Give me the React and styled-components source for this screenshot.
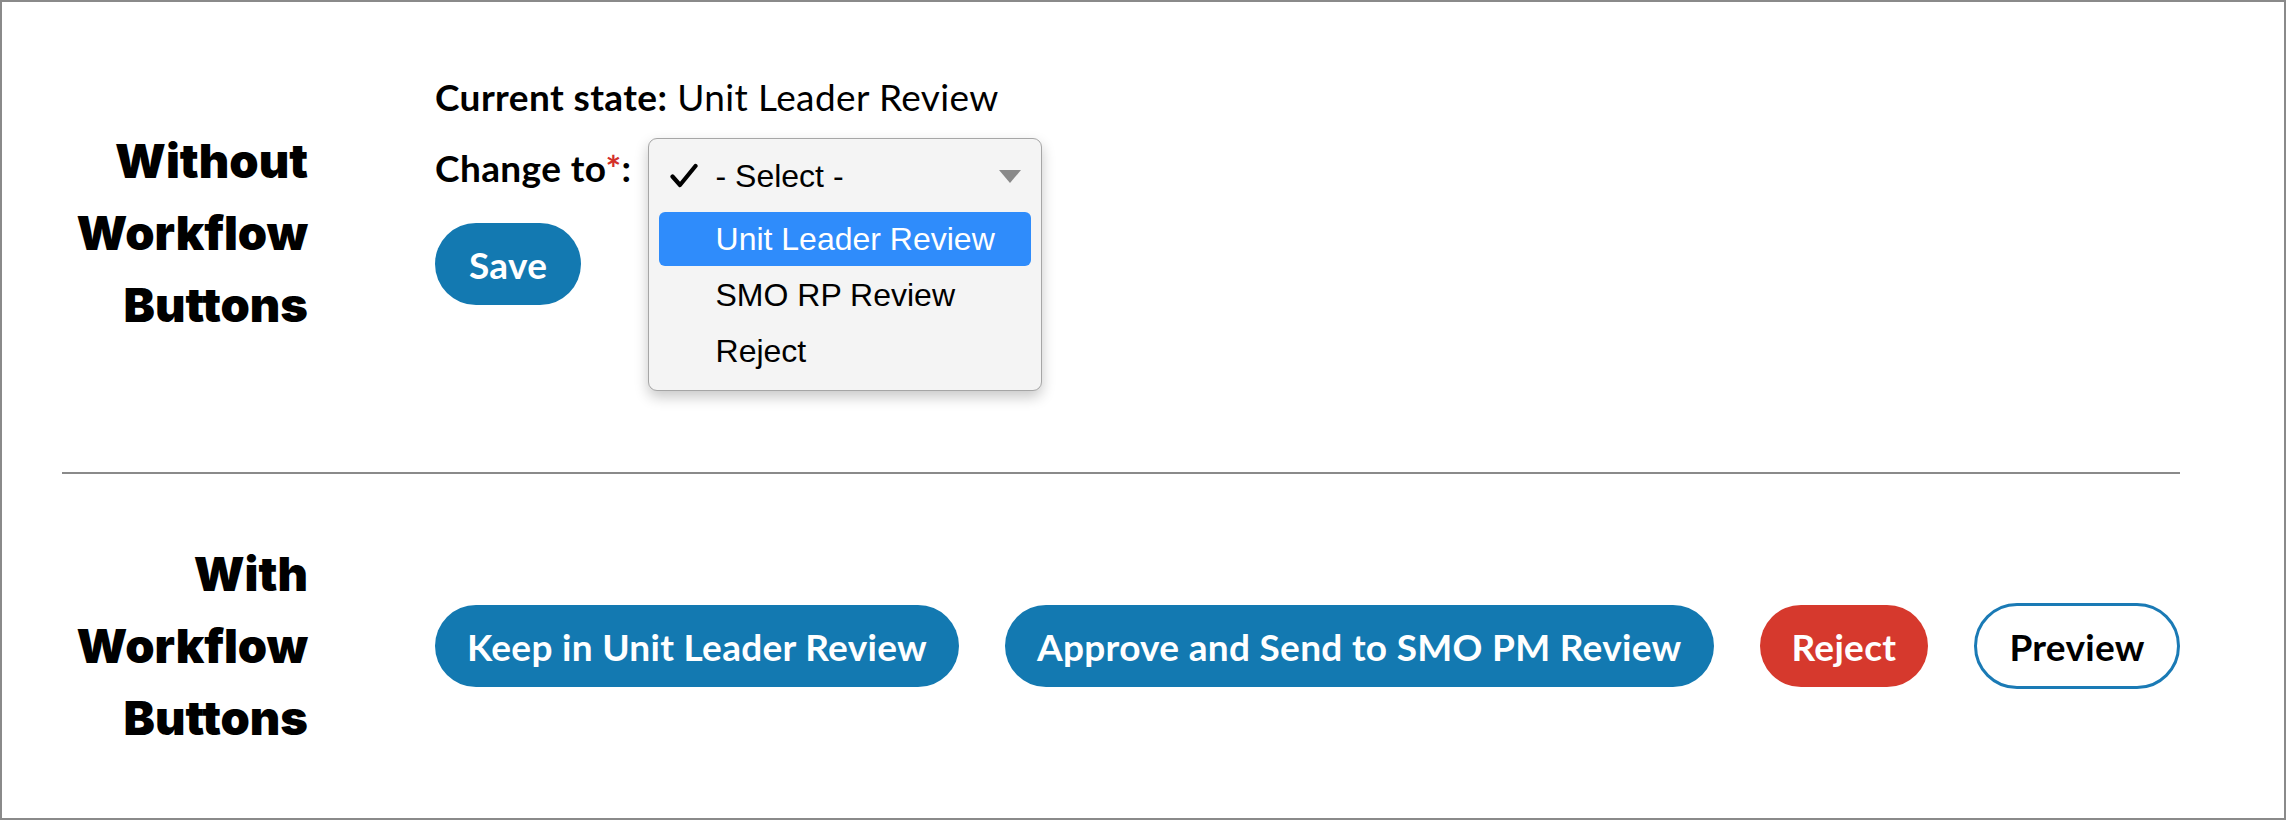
import React from 'react';
import styled, { createGlobalStyle } from 'styled-components';

const GlobalStyle = createGlobalStyle`
  * { box-sizing: border-box; }
  body {
    margin: 0;
    background: #ffffff;
    font-family: 'Lato', 'Open Sans', Arial, sans-serif;
    color: #000;
  }
`

const Frame = styled.div`
  width: 2286px;
  height: 820px;
  border: 2px solid #8a8a8a;
  background: #fff;
`

const Section = styled.div`
  display: flex;
  align-items: center;
  height: ${p => p.$height}px;
`

const Heading = styled.h2`
  flex-shrink: 0;
  width: 306px;
  margin: 0 0 ${p => p.$lift || 0}px;
  text-align: right;
  font-family: 'Inter', 'DejaVu Sans', sans-serif;
  font-weight: 900;
  font-size: 47px;
  line-height: 72px;
`

const StateForm = styled.div`
  align-self: flex-start;
  display: flex;
  flex-direction: column;
  align-items: flex-start;
  margin-left: 127px;
  padding-top: 73px;
`

const StateLine = styled.div`
  font-size: 37px;
  line-height: 44px;
  letter-spacing: 0.4px;
  b { font-weight: 700; }
`

const ChangeRow = styled.div`
  display: flex;
  align-items: center;
  height: 44px;
  margin-top: 27px;
`

const FieldLabel = styled.label`
  font-size: 37px;
  line-height: 44px;
  letter-spacing: 0.4px;
  font-weight: 700;
`

const Req = styled.span`
  color: #d3302b;
`

const SelectWrap = styled.div`
  position: relative;
  width: 394px;
  height: 44px;
  margin-left: 16px;
`

const Menu = styled.ul`
  position: absolute;
  top: -8px;
  left: 0;
  width: 394px;
  margin: 0;
  padding: 10px 10px 12px;
  list-style: none;
  background: #f4f4f4;
  border: 1px solid #a6a6a6;
  border-radius: 9px;
  box-shadow: 0 6px 14px rgba(0, 0, 0, 0.22);
  font-family: 'Liberation Sans', Arial, sans-serif;
  font-size: 32px;
  display: flex;
  flex-direction: column;
  gap: 2px;
`

const Option = styled.li`
  position: relative;
  display: flex;
  align-items: center;
  height: 54px;
  padding-left: 57px;
  border-radius: 6px;
  color: ${p => (p.$active ? '#fff' : '#000')};
  background: ${p => (p.$active ? '#2f8cfb' : 'transparent')};
  margin-bottom: ${p => (p.$first ? '7px' : '0')};
`

const Check = styled.svg`
  position: absolute;
  left: 11px;
  top: 14px;
`

const Arrow = styled.span`
  position: absolute;
  right: 10px;
  top: 21px;
  width: 0;
  height: 0;
  border-left: 11px solid transparent;
  border-right: 11px solid transparent;
  border-top: 13px solid #8a8a8a;
`

const Button = styled.button`
  height: ${p => (p.$variant === 'outline' ? 86 : 82)}px;
  padding: 0 32px;
  border-radius: 44px;
  border: ${p => (p.$variant === 'outline' ? '3px solid #1a7ab5' : 'none')};
  background: ${p =>
    p.$variant === 'danger' ? '#d6392d' : p.$variant === 'outline' ? '#fff' : '#1379b1'};
  color: ${p => (p.$variant === 'outline' ? '#000' : '#fff')};
  font-family: 'Lato', 'Open Sans', Arial, sans-serif;
  font-size: 37px;
  font-weight: 700;
  letter-spacing: 0.3px;
  white-space: nowrap;
  cursor: pointer;
`

const SaveButton = styled(Button)`
  margin-top: 33px;
  padding: 0 34px;
`

const Divider = styled.hr`
  height: 2px;
  margin: 0 104px 0 60px;
  border: none;
  background: #8a8a8a;
`

const ButtonRow = styled.div`
  display: flex;
  align-items: center;
  gap: 46px;
  margin-left: 127px;
`

export default function App() {
  return (
    <>
      <GlobalStyle />
      <Frame>
        <Section $height={470}>
          <Heading $lift={8}>Without<br />Workflow<br />Buttons</Heading>
          <StateForm>
            <StateLine><b>Current state:</b> Unit Leader Review</StateLine>
            <ChangeRow>
              <FieldLabel>Change to<Req>*</Req>:</FieldLabel>
              <SelectWrap>
                <Menu>
                  <Option $first>
                    <Check width="28" height="26" viewBox="0 0 28 26">
                      <path d="M2.5 13.5 L10 22 L25.5 3" fill="none" stroke="#000" strokeWidth="4.2" strokeLinecap="round" strokeLinejoin="round" />
                    </Check>
                    - Select -
                    <Arrow />
                  </Option>
                  <Option $active>Unit Leader Review</Option>
                  <Option>SMO RP Review</Option>
                  <Option>Reject</Option>
                </Menu>
              </SelectWrap>
            </ChangeRow>
            <SaveButton>Save</SaveButton>
          </StateForm>
        </Section>
        <Divider />
        <Section $height={344}>
          <Heading>With<br />Workflow<br />Buttons</Heading>
          <ButtonRow>
            <Button>Keep in Unit Leader Review</Button>
            <Button>Approve and Send to SMO PM Review</Button>
            <Button $variant="danger">Reject</Button>
            <Button $variant="outline">Preview</Button>
          </ButtonRow>
        </Section>
      </Frame>
    </>
  );
}
